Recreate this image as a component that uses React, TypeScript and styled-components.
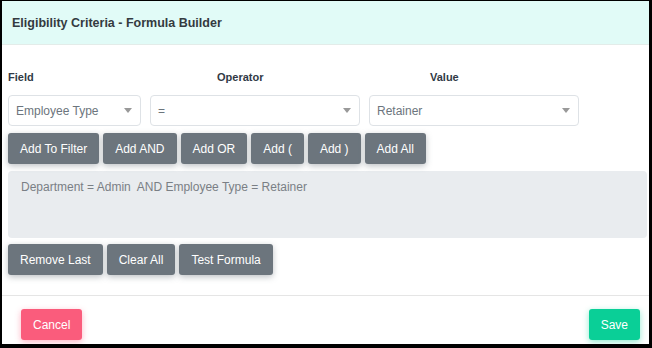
import React from 'react';
import styled, { createGlobalStyle } from 'styled-components';

const GlobalStyle = createGlobalStyle`
  html, body {
    margin: 0;
    padding: 0;
    background: #000;
  }
  body {
    font-family: 'Liberation Sans', Arial, sans-serif;
  }
`;

const Frame = styled.div`
  width: 647px;
  height: 343px;
  margin: 1px 0 0 2px;
  background: #fff;
  display: flex;
  flex-direction: column;
  overflow: hidden;
`;

const Header = styled.div`
  height: 43px;
  background: #e1fbf7;
  border-bottom: 1px solid #e3ece9;
  display: flex;
  align-items: center;
  padding-left: 10px;
`;

const Title = styled.h4`
  margin: 0;
  font-size: 12.5px;
  font-weight: 700;
  color: #343a40;
`;

const Body = styled.div`
  padding: 24px 0 20px 6px;
  border-bottom: 1px solid #e5e5e5;
`;

const LabelRow = styled.div`
  display: flex;
  height: 16px;
  align-items: center;
  margin-bottom: 10px;
`;

const Label = styled.div<{ $width?: number }>`
  width: ${(p) => (p.$width ? `${p.$width}px` : 'auto')};
  font-size: 11px;
  font-weight: 700;
  color: #313a46;
`;

const SelectRow = styled.div`
  display: flex;
  gap: 9px;
`;

const Select = styled.div<{ $width: number }>`
  width: ${(p) => p.$width}px;
  height: 31px;
  box-sizing: border-box;
  border: 1px solid #dee2e6;
  border-radius: 4px;
  display: flex;
  align-items: center;
  justify-content: space-between;
  padding: 0 8px 0 7px;
  font-size: 12px;
  color: #6c757d;
`;

const Caret = () => (
  <svg width="8" height="5" viewBox="0 0 8 5">
    <path d="M0 0 L8 0 L4 5 Z" fill="#999" />
  </svg>
);

const ButtonRow = styled.div<{ $top: number }>`
  display: flex;
  gap: 4px;
  margin-top: ${(p) => p.$top}px;
`;

const Button = styled.button<{ $variant?: 'secondary' | 'danger' | 'success' }>`
  height: 31px;
  padding: 0 12px;
  border: none;
  border-radius: 3px;
  font-family: 'Liberation Sans', Arial, sans-serif;
  font-size: 12px;
  color: #fff;
  cursor: pointer;
  background: ${(p) =>
    p.$variant === 'danger' ? '#fa5c7c' : p.$variant === 'success' ? '#0acf97' : '#6c757d'};
  box-shadow: 0 2px 6px
    ${(p) =>
      p.$variant === 'danger'
        ? 'rgba(250, 92, 124, 0.45)'
        : p.$variant === 'success'
        ? 'rgba(10, 207, 151, 0.45)'
        : 'rgba(108, 117, 125, 0.45)'};
`;

const FormulaBox = styled.div`
  margin: 7px 2px 0 0;
  height: 67px;
  box-sizing: border-box;
  background: #e9ecef;
  border-radius: 4px;
  padding: 9px 13px;
  font-size: 12px;
  color: #7a7f85;
`;

const Footer = styled.div`
  display: flex;
  justify-content: space-between;
  padding: 13px 9px 0 19px;
`;

const operators = ['Add To Filter', 'Add AND', 'Add OR', 'Add (', 'Add )', 'Add All'];
const actions = ['Remove Last', 'Clear All', 'Test Formula'];

const App = () => {
  return (
    <>
      <GlobalStyle />
      <Frame>
        <Header>
          <Title>Eligibility Criteria - Formula Builder</Title>
        </Header>
        <Body>
          <LabelRow>
            <Label $width={209}>Field</Label>
            <Label $width={213}>Operator</Label>
            <Label>Value</Label>
          </LabelRow>
          <SelectRow>
            <Select $width={133}>
              <span>Employee Type</span>
              <Caret />
            </Select>
            <Select $width={210}>
              <span>=</span>
              <Caret />
            </Select>
            <Select $width={210}>
              <span>Retainer</span>
              <Caret />
            </Select>
          </SelectRow>
          <ButtonRow $top={7}>
            {operators.map((op) => (
              <Button key={op}>{op}</Button>
            ))}
          </ButtonRow>
          <FormulaBox>Department = Admin&nbsp; AND Employee Type = Retainer</FormulaBox>
          <ButtonRow $top={6}>
            {actions.map((a) => (
              <Button key={a}>{a}</Button>
            ))}
          </ButtonRow>
        </Body>
        <Footer>
          <Button $variant="danger">Cancel</Button>
          <Button $variant="success">Save</Button>
        </Footer>
      </Frame>
    </>
  );
};

export default App;
